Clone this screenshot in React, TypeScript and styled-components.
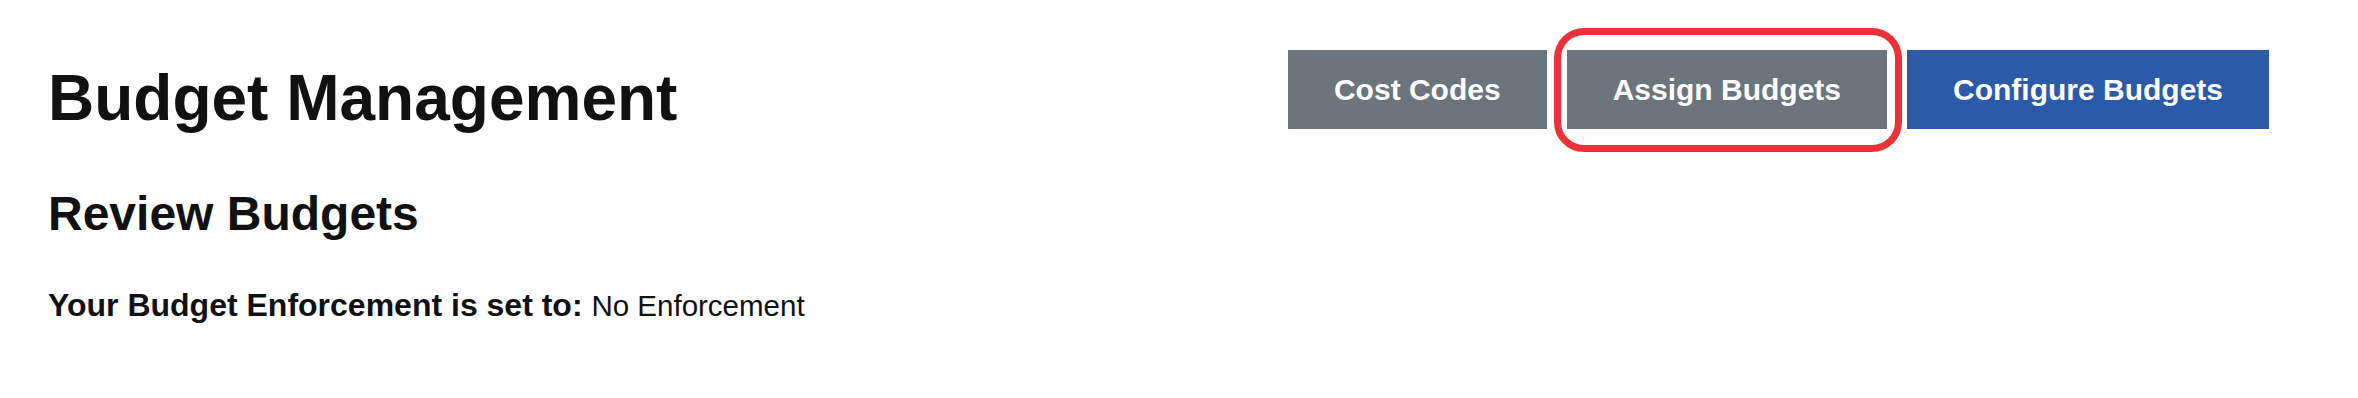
import React from 'react';
import styled, {createGlobalStyle} from 'styled-components';

const GlobalStyle = createGlobalStyle`
    html, body {
        margin: 0;
        padding: 0;
        background: #ffffff;
    }
    body {
        font-family: "Liberation Sans", Arial, Helvetica, sans-serif;
        color: #111111;
    }
`;

const Page = styled.div`
    padding: 50px 89px 0 48px;
`;

const Header = styled.div`
    display: flex;
    justify-content: space-between;
    align-items: flex-start;
`;

const Title = styled.h1`
    margin: 11px 0 0;
    font-size: 64px;
    line-height: 74px;
    font-weight: 700;
    color: #111111;
`;

const Actions = styled.div`
    display: flex;
    gap: 20px;
`;

const Button = styled.button<{$variant: 'secondary' | 'primary'}>`
    height: 79px;
    padding: 0 46px;
    border: none;
    border-radius: 0;
    font-family: "Liberation Sans", Arial, Helvetica, sans-serif;
    font-size: 30px;
    font-weight: 700;
    color: #ffffff;
    background: ${p => (p.$variant === 'primary' ? '#2a5aa8' : '#6c747c')};
    cursor: pointer;
`;

// red annotation ring drawn round the highlighted button
const Highlight = styled.div`
    position: relative;
    display: flex;

    &::after {
        content: '';
        position: absolute;
        left: -13px;
        right: -15px;
        top: -22px;
        bottom: -23px;
        border: 7px solid #ec3238;
        border-radius: 30px;
        pointer-events: none;
    }
`;

const SubTitle = styled.h2`
    margin: 51px 0 0;
    font-size: 48px;
    line-height: 55px;
    font-weight: 700;
`;

const Setting = styled.p`
    margin: 46px 0 0;
    font-size: 32px;
    line-height: 37px;

    strong {
        font-weight: 700;
    }

    span {
        font-size: 29.5px;
    }
`;

export default function App() {
    return (
        <React.Fragment>
            <GlobalStyle/>
            <Page>
                <Header>
                    <Title>Budget Management</Title>
                    <Actions>
                        <Button $variant='secondary'>Cost Codes</Button>
                        <Highlight>
                            <Button $variant='secondary'>Assign Budgets</Button>
                        </Highlight>
                        <Button $variant='primary'>Configure Budgets</Button>
                    </Actions>
                </Header>
                <SubTitle>Review Budgets</SubTitle>
                <Setting>
                    <strong>Your Budget Enforcement is set to:</strong> <span>No Enforcement</span>
                </Setting>
            </Page>
        </React.Fragment>
    );
}
